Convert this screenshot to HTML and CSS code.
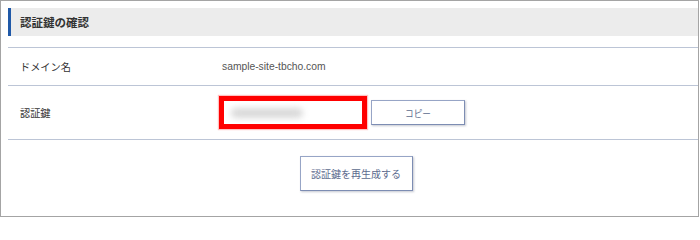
FILE: index.html
```html
<!DOCTYPE html>
<html lang="ja">
<head>
<meta charset="utf-8">
<title>認証鍵の確認</title>
<link rel="stylesheet" href="styles.css">
</head>
<body>
<div class="frame">
  <h2 class="section-title">認証鍵の確認</h2>
  <div class="info-table">
    <div class="row row-domain">
      <div class="label">ドメイン名</div>
      <div class="value domain">sample-site-tbcho.com</div>
    </div>
    <div class="row row-key">
      <div class="label">認証鍵</div>
      <div class="value key-cell">
        <div class="key-box"><span class="key-blur"></span></div>
        <button class="btn btn-copy" type="button">コピー</button>
      </div>
    </div>
  </div>
  <div class="actions">
    <button class="btn btn-regen" type="button">認証鍵を再生成する</button>
  </div>
</div>
</body>
</html>
```

FILE: styles.css
```css
* { box-sizing: border-box; }
html, body { margin: 0; padding: 0; background: #ffffff; }
body {
  font-family: "Liberation Sans", "Noto Sans CJK JP", sans-serif;
  color: #333333;
}
.frame {
  width: 699px;
  height: 217px;
  border: 1px solid #a4a4a4;
  padding: 7px 0 0 7px;
  overflow: hidden;
}
.section-title {
  margin: 0;
  height: 28px;
  background: #ececec;
  border-left: 3px solid #2059a8;
  padding-left: 9px;
  display: flex;
  align-items: center;
  font-size: 11.5px;
  font-weight: bold;
  color: #333333;
}
.info-table {
  margin-top: 11px;
  border-top: 1px solid #bcc5d6;
}
.row {
  display: grid;
  grid-template-columns: 214px 1fr;
  align-items: center;
  border-bottom: 1px solid #bcc5d6;
}
.row-domain { height: 38px; }
.row-key { height: 54px; }
.label {
  padding-left: 12px;
  font-size: 10.2px;
  color: #333333;
}
.domain {
  font-size: 10.3px;
  color: #555555;
}
.key-cell {
  display: flex;
  align-items: center;
}
.key-box {
  width: 148px;
  height: 33px;
  margin-left: -3px;
  border: 5px solid #ff0000;
  box-shadow: 0 0 1px 1px rgba(255, 80, 80, 0.35);
  display: flex;
  align-items: center;
  padding-left: 7px;
}
.key-blur {
  display: block;
  width: 72px;
  height: 10px;
  border-radius: 5px;
  background: #d9d9d9;
  filter: blur(3px);
}
.btn {
  background: #ffffff;
  border: 1px solid #97a5c6;
  border-right-color: #7d8db3;
  border-bottom-color: #7d8db3;
  box-shadow: 1px 1px 2px rgba(60, 70, 100, 0.3);
  color: #5c6b8e;
  font-family: "Liberation Sans", "Noto Sans CJK JP", sans-serif;
  padding: 0;
  cursor: pointer;
}
.btn-copy {
  margin-left: 4px;
  width: 94px;
  height: 25px;
  font-size: 8.6px;
}
.actions {
  display: flex;
  justify-content: center;
  padding: 16px 0 0 6px;
}
.btn-regen {
  width: 113px;
  height: 35px;
  font-size: 10px;
}
```
